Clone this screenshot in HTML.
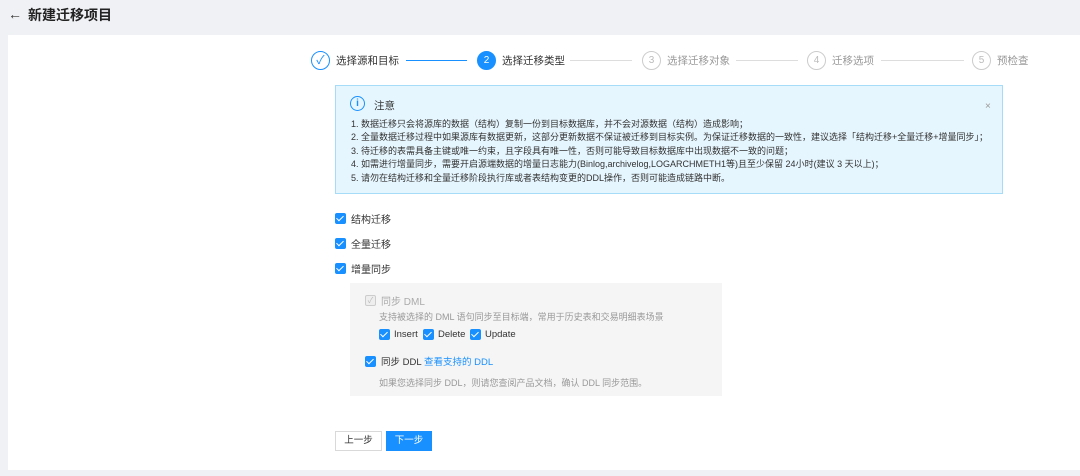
<!DOCTYPE html>
<html><head><meta charset="utf-8"><style>
*{margin:0;padding:0;box-sizing:border-box}
body{width:1080px;height:476px;background:#f0f1f5;font-family:"Liberation Sans","Noto Sans CJK SC",sans-serif;position:relative;overflow:hidden;color:#333}
.a{position:absolute;white-space:nowrap}
.card{position:absolute;left:8px;top:35px;width:1072px;height:435px;background:#fff}
.circ{position:absolute;width:19px;height:19px;border-radius:50%;border:1px solid #ccc;color:#bbb;font-size:10px;text-align:center;line-height:17px}
.st{font-size:10.5px;color:#333}
.line{position:absolute;height:1px;background:#ddd;top:60px}
.cb{position:absolute;width:11px;height:11px;background:#1890ff;border-radius:2px}
.cb:after{content:"";position:absolute;left:3px;top:1px;width:3px;height:6px;border:solid #fff;border-width:0 1.5px 1.5px 0;transform:rotate(45deg)}
.al{font-size:9px;color:#333;left:351px}
.t{font-size:10px;color:#333}
</style></head><body>
<div class="a" style="left:8px;top:6px;font-size:14px;color:#333">←</div>
<div class="a" style="left:28px;top:5px;font-size:14px;font-weight:bold;color:#222">新建迁移项目</div>
<div class="card"></div>

<div class="circ" style="left:311px;top:51px;border-color:#1890ff;color:#1890ff;font-size:12px">✓</div>
<div class="a st" style="left:336px;top:53px">选择源和目标</div>
<div class="line" style="left:406px;width:61px;background:#1890ff"></div>
<div class="circ" style="left:477px;top:51px;background:#1890ff;border-color:#1890ff;color:#fff">2</div>
<div class="a st" style="left:502px;top:53px">选择迁移类型</div>
<div class="line" style="left:570px;width:62px"></div>
<div class="circ" style="left:642px;top:51px">3</div>
<div class="a st" style="left:667px;top:53px;color:#999">选择迁移对象</div>
<div class="line" style="left:736px;width:62px"></div>
<div class="circ" style="left:807px;top:51px">4</div>
<div class="a st" style="left:832px;top:53px;color:#999">迁移选项</div>
<div class="line" style="left:881px;width:83px"></div>
<div class="circ" style="left:972px;top:51px">5</div>
<div class="a st" style="left:997px;top:53px;color:#999">预检查</div>

<div class="a" style="left:335px;top:85px;width:668px;height:109px;background:#e6f6fe;border:1px solid #a6dcf8"></div>
<div class="a" style="left:350px;top:96px;width:15px;height:15px;border:1.3px solid #1890ff;border-radius:50%;color:#1890ff;font-size:10px;text-align:center;line-height:13px;font-weight:bold">i</div>
<div class="a" style="left:374px;top:98px;font-size:10.5px">注意</div>
<div class="a" style="left:985px;top:101px;font-size:10px;color:#999">×</div>
<div class="a al" style="top:117px">1. 数据迁移只会将源库的数据（结构）复制一份到目标数据库，并不会对源数据（结构）造成影响；</div>
<div class="a al" style="top:130px">2. 全量数据迁移过程中如果源库有数据更新，这部分更新数据不保证被迁移到目标实例。为保证迁移数据的一致性，建议选择「结构迁移+全量迁移+增量同步」；</div>
<div class="a al" style="top:144px">3. 待迁移的表需具备主键或唯一约束，且字段具有唯一性，否则可能导致目标数据库中出现数据不一致的问题；</div>
<div class="a al" style="top:157px">4. 如需进行增量同步，需要开启源端数据的增量日志能力(Binlog,archivelog,LOGARCHMETH1等)且至少保留 24小时(建议 3 天以上)；</div>
<div class="a al" style="top:171px">5. 请勿在结构迁移和全量迁移阶段执行库或者表结构变更的DDL操作，否则可能造成链路中断。</div>

<div class="cb" style="left:335px;top:213px"></div><div class="a t" style="left:351px;top:211px">结构迁移</div>
<div class="cb" style="left:335px;top:238px"></div><div class="a t" style="left:351px;top:236px">全量迁移</div>
<div class="cb" style="left:335px;top:263px"></div><div class="a t" style="left:351px;top:261px">增量同步</div>

<div class="a" style="left:350px;top:283px;width:372px;height:113px;background:#f5f5f5"></div>
<div class="a" style="left:365px;top:295px;width:11px;height:11px;border:1px solid #ccc;border-radius:2px;background:#eee;color:#bbb;font-size:8px;line-height:9px;text-align:center">✓</div>
<div class="a t" style="left:381px;top:293px;color:#aaa">同步 DML</div>
<div class="a" style="left:379px;top:310px;font-size:9px;color:#999">支持被选择的 DML 语句同步至目标端，常用于历史表和交易明细表场景</div>
<div class="cb" style="left:379px;top:329px"></div><div class="a" style="left:394px;top:329px;font-size:9.5px">Insert</div>
<div class="cb" style="left:423px;top:329px"></div><div class="a" style="left:438px;top:329px;font-size:9.5px">Delete</div>
<div class="cb" style="left:470px;top:329px"></div><div class="a" style="left:485px;top:329px;font-size:9.5px">Update</div>
<div class="cb" style="left:365px;top:356px"></div><div class="a" style="left:381px;top:354px;font-size:9.5px">同步 DDL</div>
<div class="a" style="left:424px;top:354px;font-size:9.5px;color:#1890ff">查看支持的 DDL</div>
<div class="a" style="left:379px;top:376px;font-size:9px;color:#999">如果您选择同步 DDL，则请您查阅产品文档，确认 DDL 同步范围。</div>

<div class="a" style="left:335px;top:431px;width:47px;height:20px;border:1px solid #d9d9d9;background:#fff;font-size:9.5px;text-align:center;line-height:18px">上一步</div>
<div class="a" style="left:386px;top:431px;width:46px;height:20px;background:#1890ff;color:#fff;font-size:9.5px;text-align:center;line-height:20px">下一步</div>
</body></html>
